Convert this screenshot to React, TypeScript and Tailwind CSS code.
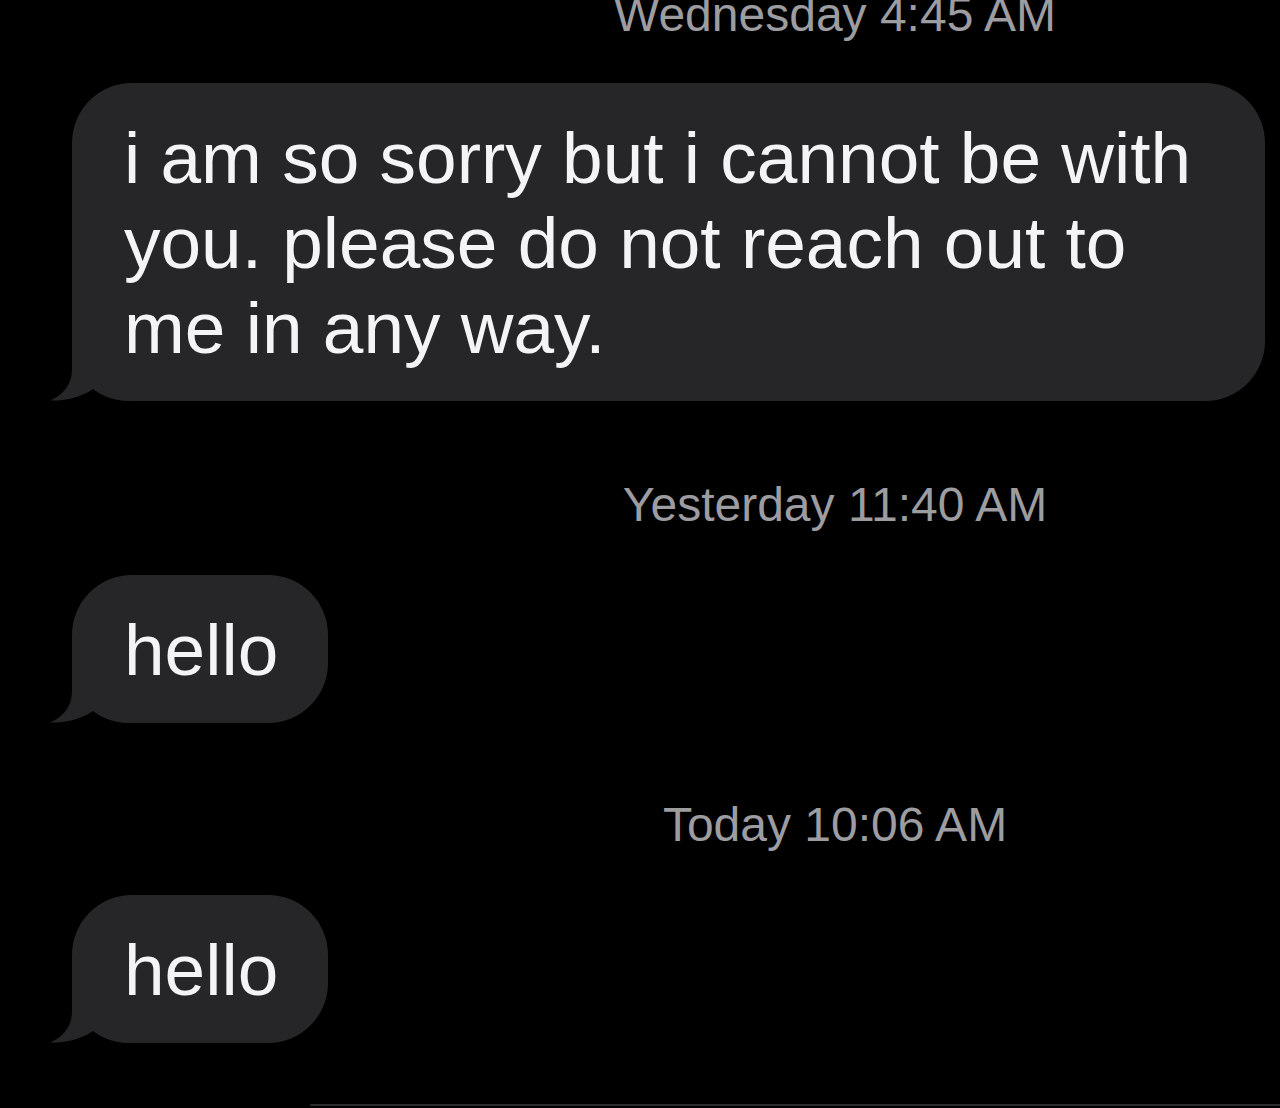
const BUBBLE = '#262628'

const Tail = () => (
  <svg
    className="absolute bottom-0 -left-[22px]"
    width="80"
    height="64"
    viewBox="0 0 80 64"
    fill={BUBBLE}
  >
    <path d="M22 0 L22 32 C22 48 13 58 0 63.5 C14 64 30 61 43 52 C53 60 66 64 80 64 L80 0 Z" />
  </svg>
)

type BubbleProps = {
  children: React.ReactNode
  wide?: boolean
}

const Bubble = ({ children, wide }: BubbleProps) => (
  <div className="pl-[72px]">
    <div
      className={`relative rounded-[60px] bg-[#262628] pl-[52px] pt-[32px] pb-[31px] text-[73px] leading-[85px] text-[#f4f4f6] ${
        wide ? 'w-[1193px] pr-[60px]' : 'w-fit pr-[50px]'
      }`}
    >
      <Tail />
      <p className="relative">{children}</p>
    </div>
  </div>
)

const Stamp = ({ day, time }: { day: string; time: string }) => (
  <div className="pl-[390px] text-center text-[48px] leading-[56px] text-[#9c9ca1]">
    {day} {time}
  </div>
)

export default function App() {
  return (
    <div
      className="flex h-[1108px] w-[1280px] flex-col overflow-hidden bg-black"
      style={{ fontFamily: '"Liberation Sans", Arial, sans-serif' }}
    >
      <div className="-mt-[13px]">
        <Stamp day="Wednesday" time="4:45 AM" />
      </div>

      <div className="mt-[40px]">
        <Bubble wide>
          i am so sorry but i cannot be with you. please do not reach out to me in any way.
        </Bubble>
      </div>

      <div className="mt-[76px]">
        <Stamp day="Yesterday" time="11:40 AM" />
      </div>

      <div className="mt-[42px]">
        <Bubble>hello</Bubble>
      </div>

      <div className="mt-[74px]">
        <Stamp day="Today" time="10:06 AM" />
      </div>

      <div className="mt-[42px]">
        <Bubble>hello</Bubble>
      </div>

      {/* top edge of the compose bar, barely in frame */}
      <div className="mt-[61px] ml-[310px] h-[2px] rounded-l-full bg-[#2c2c2e]" />
    </div>
  )
}
